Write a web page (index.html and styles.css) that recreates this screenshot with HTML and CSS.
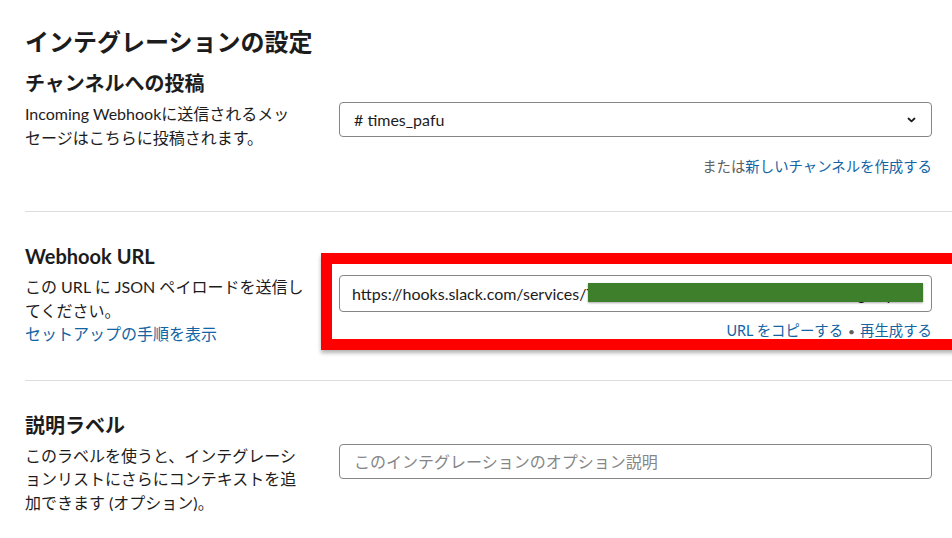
FILE: index.html
```html
<!DOCTYPE html>
<html lang="ja">
<head>
<meta charset="utf-8">
<title>インテグレーションの設定</title>
<link rel="stylesheet" href="styles.css">
</head>
<body>
<div class="page">
  <h1 class="title">インテグレーションの設定</h1>

  <section class="section first">
    <h2 class="heading">チャンネルへの投稿</h2>
    <div class="row">
      <p class="desc strict">Incoming Webhookに送信されるメッセージはこちらに投稿されます。</p>
      <div class="control">
        <div class="select">
          <span># times_pafu</span>
          <svg class="chev" width="9" height="6" viewBox="0 0 9 6"><path d="M1.5 1.5 L4.5 4.3 L7.5 1.5" fill="none" stroke="#1d1c1d" stroke-width="1.8" stroke-linecap="round" stroke-linejoin="round"/></svg>
        </div>
        <p class="meta long"><span class="gray">または</span><a class="link">新しいチャンネルを作成する</a></p>
      </div>
    </div>
  </section>

  <section class="section">
    <h2 class="heading">Webhook URL</h2>
    <div class="row">
      <div class="desc">
        <p>この URL に JSON ペイロードを送信してください。</p>
        <a class="link block">セットアップの手順を表示</a>
      </div>
      <div class="control">
        <div class="input url">
          <span class="url-text">https://hooks.slack.com/services/T0XXXXXXX/B0XXXXXXX/XXXXXXXgXXy</span>
          <span class="redact"></span>
        </div>
        <p class="meta short"><a class="link">URL をコピーする</a><span class="dot">•</span><a class="link">再生成する</a></p>
        <div class="highlight"></div>
      </div>
    </div>
  </section>

  <section class="section last">
    <h2 class="heading">説明ラベル</h2>
    <div class="row">
      <p class="desc">このラベルを使うと、インテグレーションリストにさらにコンテキストを追加できます (オプション)。</p>
      <div class="control">
        <div class="input">
          <span class="placeholder">このインテグレーションのオプション説明</span>
        </div>
      </div>
    </div>
  </section>
</div>
</body>
</html>
```

FILE: styles.css
```css
* { box-sizing: border-box; }
html, body {
  margin: 0;
  padding: 0;
  background: #ffffff;
  overflow: hidden;
}
body {
  font-family: Lato, "Noto Sans CJK JP", sans-serif;
  color: #1d1c1d;
  width: 952px;
  height: 538px;
}
.page {
  padding: 27px 0 0 25px;
}
.title {
  margin: 0;
  font-size: 24px;
  line-height: 30px;
  font-weight: 700;
}
.section {
  padding: 31px 0 34px 0;
  border-bottom: 1px solid #dddddd;
}
.section.first {
  padding-top: 13px;
}
.section.last {
  border-bottom: none;
}
.heading {
  margin: 0;
  font-size: 20px;
  line-height: 26px;
  font-weight: 700;
}
.row {
  display: flex;
  margin-top: 6px;
  gap: 30px;
}
.desc {
  width: 284px;
  flex: none;
  margin: 0;
  font-size: 16px;
  line-height: 23.5px;
}
.desc.strict {
  line-break: strict;
}
.desc p {
  margin: 0;
}
.control {
  position: relative;
  width: 593px;
  flex: none;
}
.select, .input {
  display: flex;
  align-items: center;
  border: 1px solid #868686;
  border-radius: 4px;
  padding: 0 14px;
  font-size: 16px;
  position: relative;
}
.select {
  height: 35px;
  justify-content: space-between;
  padding-right: 15px;
}
.chev {
  display: block;
}
.input {
  height: 35px;
  overflow: hidden;
  white-space: nowrap;
}
.input.url {
  height: 37px;
  padding-left: 12px;
}
.url-text {
  color: #1d1c1d;
}
.redact {
  position: absolute;
  left: 248px;
  top: 7px;
  width: 335px;
  height: 19px;
  background: #3d7f2b;
  box-shadow: 0 1px 2px rgba(0,0,0,0.35);
}
.placeholder {
  color: #868686;
}
.meta {
  margin: 0;
  text-align: right;
  font-size: 14.4px;
  line-height: 20px;
}
.meta.long {
  margin-top: 20px;
}
.meta.short {
  margin-top: 9px;
}
.gray {
  color: #616061;
}
.link {
  color: #1264a3;
  text-decoration: none;
}
.link.block {
  display: block;
}
.dot {
  color: #616061;
  margin: 0 5px;
  font-size: 12px;
}
.highlight {
  position: absolute;
  left: -18px;
  top: -22px;
  width: 660px;
  height: 97px;
  border: 11px solid #ff0000;
  box-shadow: 0 3px 4px rgba(0,0,0,0.3);
}
```
